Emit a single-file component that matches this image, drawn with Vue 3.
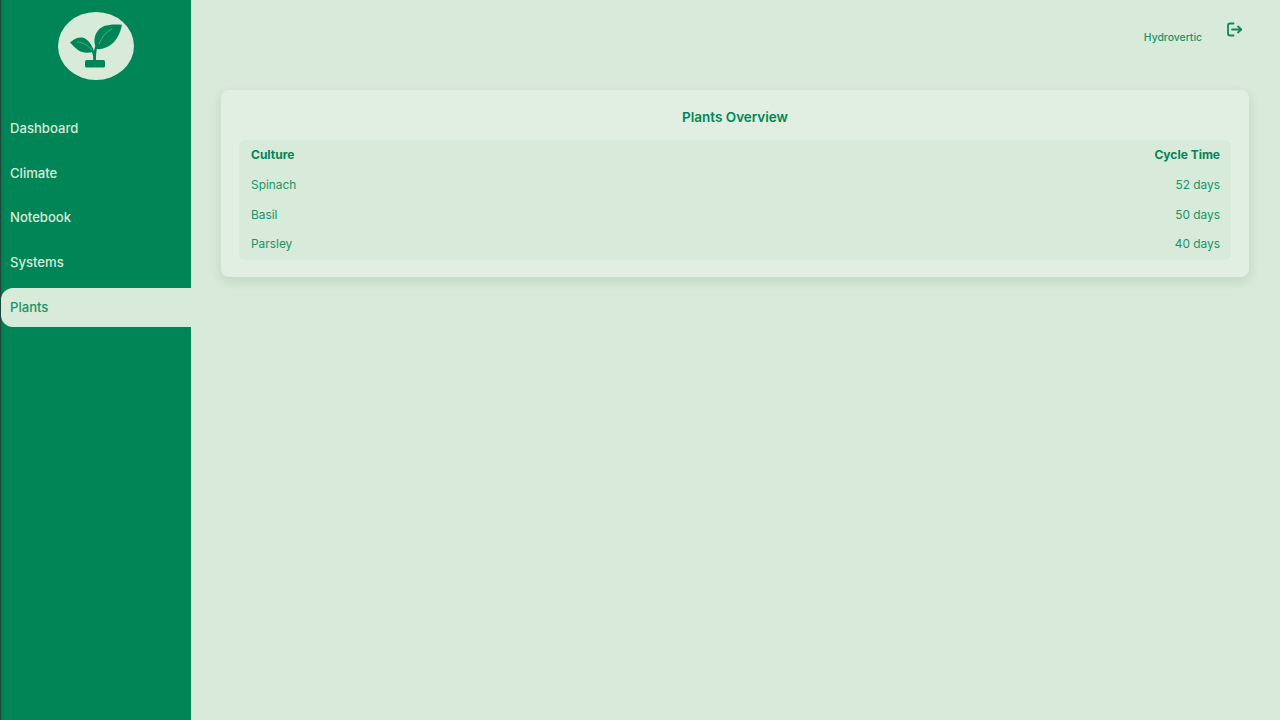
<script setup>
const navItems = [
  { label: 'Dashboard' },
  { label: 'Climate' },
  { label: 'Notebook' },
  { label: 'Systems' },
  { label: 'Plants', active: true }
]
const plants = [
  { culture: 'Spinach', cycle: '52 days' },
  { culture: 'Basil', cycle: '50 days' },
  { culture: 'Parsley', cycle: '40 days' }
]
</script>

<template>
  <div class="app">
    <aside class="sidebar">
      <div class="logo">
        <svg class="logo-icon" viewBox="0 0 56 48" width="56" height="48">
          <path fill="#008556" d="M25 39 C25.500 33 25.500 28 28 22 L30 23 C28 29 28 33 28 39 Z" />
          <path fill="none" stroke="#008556" stroke-width="2" d="M23 26 C25 29 26 32 26.500 36" />
          <path fill="#008556" d="M28.500 27 C23 15 30 6 37 3.800 C43 2.200 49 2.500 54 2.700 C53 7 52 11 49 16 C45 23 36 28 28.500 27 Z" />
          <path fill="none" stroke="#d8ead9" stroke-width="0.500" stroke-opacity="0.700" d="M31 22 C34 15 38 10 44 7" />
          <path fill="#008556" d="M2 20.500 C6 17 10 15 14 15.500 C20 16.500 24 23 26 29.500 C20 31.500 14 31 10 28 C7 26 4 22.500 2 20.500 Z" />
          <path fill="none" stroke="#d8ead9" stroke-width="0.500" stroke-opacity="0.700" d="M9 20 C15 20 20 24 24 28" />
          <path fill="#008556" d="M17 40 Q17 38 18.500 38 L35.500 38 Q37 38 37 40 L37 44 Q37 45.500 35.500 45.500 L18.500 45.500 Q17 45.500 17 44 Z" />
        </svg>
      </div>
      <nav class="nav">
        <a v-for="item in navItems" :key="item.label" class="nav-item" :class="{ active: item.active }">{{ item.label }}</a>
      </nav>
    </aside>
    <main class="main">
      <header class="topbar">
        <span class="user">Hydrovertic</span>
        <svg class="logout" viewBox="0 0 16 16" width="16" height="16" fill="none" stroke="#0a8a5c" stroke-width="1.800" stroke-linecap="round" stroke-linejoin="round">
          <path d="M7.500 1.500 H4 Q2 1.500 2 3.500 V11.500 Q2 13.500 4 13.500 H7.500" />
          <path d="M6 7.500 H15" />
          <path d="M12 4.500 L15.300 7.500 L12 10.500" />
        </svg>
      </header>
      <section class="card">
        <h2 class="title">Plants Overview</h2>
        <div class="table">
          <div class="row head">
            <span>Culture</span>
            <span>Cycle Time</span>
          </div>
          <div v-for="p in plants" :key="p.culture" class="row">
            <span>{{ p.culture }}</span>
            <span>{{ p.cycle }}</span>
          </div>
        </div>
      </section>
    </main>
  </div>
</template>

<style>
html, body { margin: 0; padding: 0; }
</style>

<style scoped>
.app {
  display: flex;
  width: 1280px;
  height: 720px;
  overflow: hidden;
  font-family: Inter, "Liberation Sans", sans-serif;
  background: #d8ead9;
  color: #008556;
}
.sidebar {
  width: 190px;
  flex: none;
  background: linear-gradient(90deg, #0a6e4e 0, #008556 2px);
  border-left: 1px solid #1d4a3a;
  display: flex;
  flex-direction: column;
  align-items: stretch;
}
.logo {
  width: 76px;
  height: 68px;
  margin: 12px 0 0 57px;
  background: #d8ead9;
  border-radius: 50%;
  display: flex;
  align-items: center;
  justify-content: center;
}
.logo-icon { display: block; }
.nav {
  display: flex;
  flex-direction: column;
  margin-top: 29px;
}
.nav-item {
  height: 38.750px;
  margin-bottom: 6px;
  padding: 0 0 1px 9px;
  box-sizing: border-box;
  display: flex;
  align-items: center;
  font-size: 13.100px;
  font-weight: 500;
  color: #d8ead9;
  border-radius: 12px 0 0 12px;
}
.nav-item.active {
  background: #d8ead9;
  color: #1a9468;
}
.main {
  flex: 1;
  min-width: 0;
  padding: 0 31px 0 30px;
}
.topbar {
  height: 90px;
  display: flex;
  justify-content: flex-end;
  align-items: flex-start;
  gap: 24px;
  padding-right: 7px;
  box-sizing: border-box;
}
.user {
  font-size: 10.400px;
  font-weight: 500;
  margin-top: 31px;
  color: #1a9468;
}
.logout { margin-top: 22px; }
.card {
  height: 187px;
  box-sizing: border-box;
  padding: 20px 18px 17px;
  background: #e1efe2;
  border-radius: 8px;
  box-shadow: 0 4px 12px rgba(0, 60, 30, 0.120);
}
.title {
  margin: 0 0 15px;
  font-size: 13.500px;
  line-height: 15px;
  font-weight: 600;
  text-align: center;
}
.table {
  height: 120px;
  background: #d8ead9;
  border-radius: 6px;
}
.row {
  height: 29.850px;
  padding: 0 11px 1px 12px;
  box-sizing: border-box;
  display: flex;
  justify-content: space-between;
  align-items: center;
  font-size: 11.900px;
  color: #1a9468;
}
.row.head {
  font-size: 12px;
  font-weight: 700;
  color: #008556;
}
</style>
